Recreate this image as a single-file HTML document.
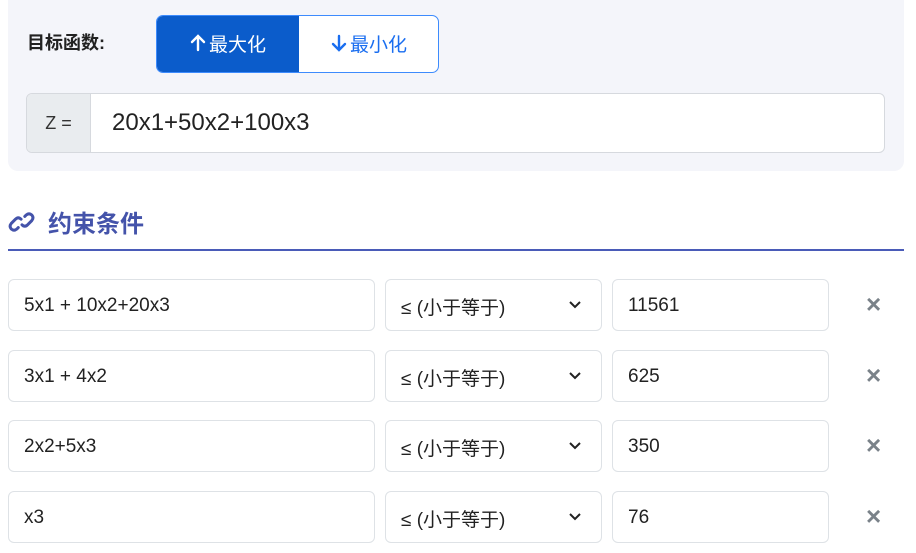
<!DOCTYPE html>
<html><head><meta charset="utf-8"><style>
*{box-sizing:border-box;margin:0;padding:0}
body{width:916px;height:553px;overflow:hidden;background:#fff;font-family:"Liberation Sans","Noto Sans CJK SC",sans-serif;color:#212529;position:relative}
.panel{position:absolute;left:8px;top:-10px;width:896px;height:181px;background:#f4f5fa;border-radius:10px}
.lbl{position:absolute;left:27px;top:29px;font-size:18px;font-weight:bold;color:#222}
.btns{position:absolute;left:156px;top:15px;width:283px;height:58px;border:1px solid #3d8bfd;border-radius:7px;overflow:hidden;display:flex;background:#fff}
.btns div{flex:0 0 auto;display:flex;align-items:center;justify-content:center;font-size:19px;gap:3px;padding-bottom:2px}
.b1{width:142px;background:#0b5ccb;color:#fff}
.b2{width:140px;color:#1a6ef0}
.ig{position:absolute;left:26px;top:93px;width:859px;height:60px;border:1px solid #d6d9de;border-radius:6px;background:#fff;display:flex;overflow:hidden}
.ad{width:64px;background:#e9ecef;border-right:1px solid #d6d9de;display:flex;align-items:center;justify-content:center;font-size:18px;color:#333}
.iv{padding-left:21px;display:flex;align-items:center;font-size:24px;color:#222}
.h{position:absolute;left:8px;top:204px;font-size:24px;font-weight:bold;color:#4453aa;display:flex;align-items:center;gap:12px}
.line{position:absolute;left:8px;top:249px;width:896px;height:1.5px;background:#4a5bb8}
.f{position:absolute;height:52px;border:1px solid #dee2e6;border-radius:6px;background:#fff;display:flex;align-items:center;padding-left:15px;padding-top:2px;font-size:19px;color:#222}
.x{position:absolute;left:866px;font-size:26px;color:#6c757d;font-weight:bold;line-height:26px;opacity:.9}
</style></head><body>
<div class="panel"></div>
<div class="lbl">目标函数:</div>
<div class="btns"><div class="b1"><svg width="16" height="18" viewBox="0 0 16 18" fill="none" stroke="#fff" stroke-width="2.4" stroke-linecap="round"><path d="M8 16V2M2 8l6-6 6 6"/></svg>最大化</div><div class="b2"><svg width="16" height="18" viewBox="0 0 16 18" fill="none" stroke="#1a6ef0" stroke-width="2.4" stroke-linecap="round"><path d="M8 2v14M2 10l6 6 6-6"/></svg>最小化</div></div>
<div class="ig"><div class="ad">Z =</div><div class="iv">20x1+50x2+100x3</div></div>
<div class="h"><svg width="28" height="24" viewBox="0 0 30 24" fill="none" stroke="#4453aa" stroke-width="3.2" stroke-linecap="round"><path d="M14 9 Q11 6 8 9 L3.5 13.5 Q1 16.5 3.5 19.5 Q6.5 22 9.5 19.5 L11 18"/><path d="M15 15 Q18 18 21 15 L25.5 10.5 Q28 7.5 25.5 4.5 Q22.5 2 19.5 4.5 L18 6"/></svg><span>约束条件</span></div>
<div class="line"></div>

<div class="f" style="left:8px;top:279px;width:367px">5x1 + 10x2+20x3</div>
<div class="f" style="left:385px;top:279px;width:217px">≤ (小于等于)</div>
<div class="f" style="left:612px;top:279px;width:217px">11561</div>
<div class="x" style="top:291px">×</div>

<div class="f" style="left:8px;top:350px;width:367px">3x1 + 4x2</div>
<div class="f" style="left:385px;top:350px;width:217px">≤ (小于等于)</div>
<div class="f" style="left:612px;top:350px;width:217px">625</div>
<div class="x" style="top:362px">×</div>

<div class="f" style="left:8px;top:420px;width:367px">2x2+5x3</div>
<div class="f" style="left:385px;top:420px;width:217px">≤ (小于等于)</div>
<div class="f" style="left:612px;top:420px;width:217px">350</div>
<div class="x" style="top:432px">×</div>

<div class="f" style="left:8px;top:491px;width:367px">x3</div>
<div class="f" style="left:385px;top:491px;width:217px">≤ (小于等于)</div>
<div class="f" style="left:612px;top:491px;width:217px">76</div>
<div class="x" style="top:503px">×</div>

<svg style="position:absolute;left:568px;top:300px" width="16" height="240"><g fill="none" stroke="#222" stroke-width="2"><path d="M2 2 L7 7 L12 2"/><path d="M2 73 L7 78 L12 73"/><path d="M2 143 L7 148 L12 143"/><path d="M2 214 L7 219 L12 214"/></g></svg>
</body></html>
